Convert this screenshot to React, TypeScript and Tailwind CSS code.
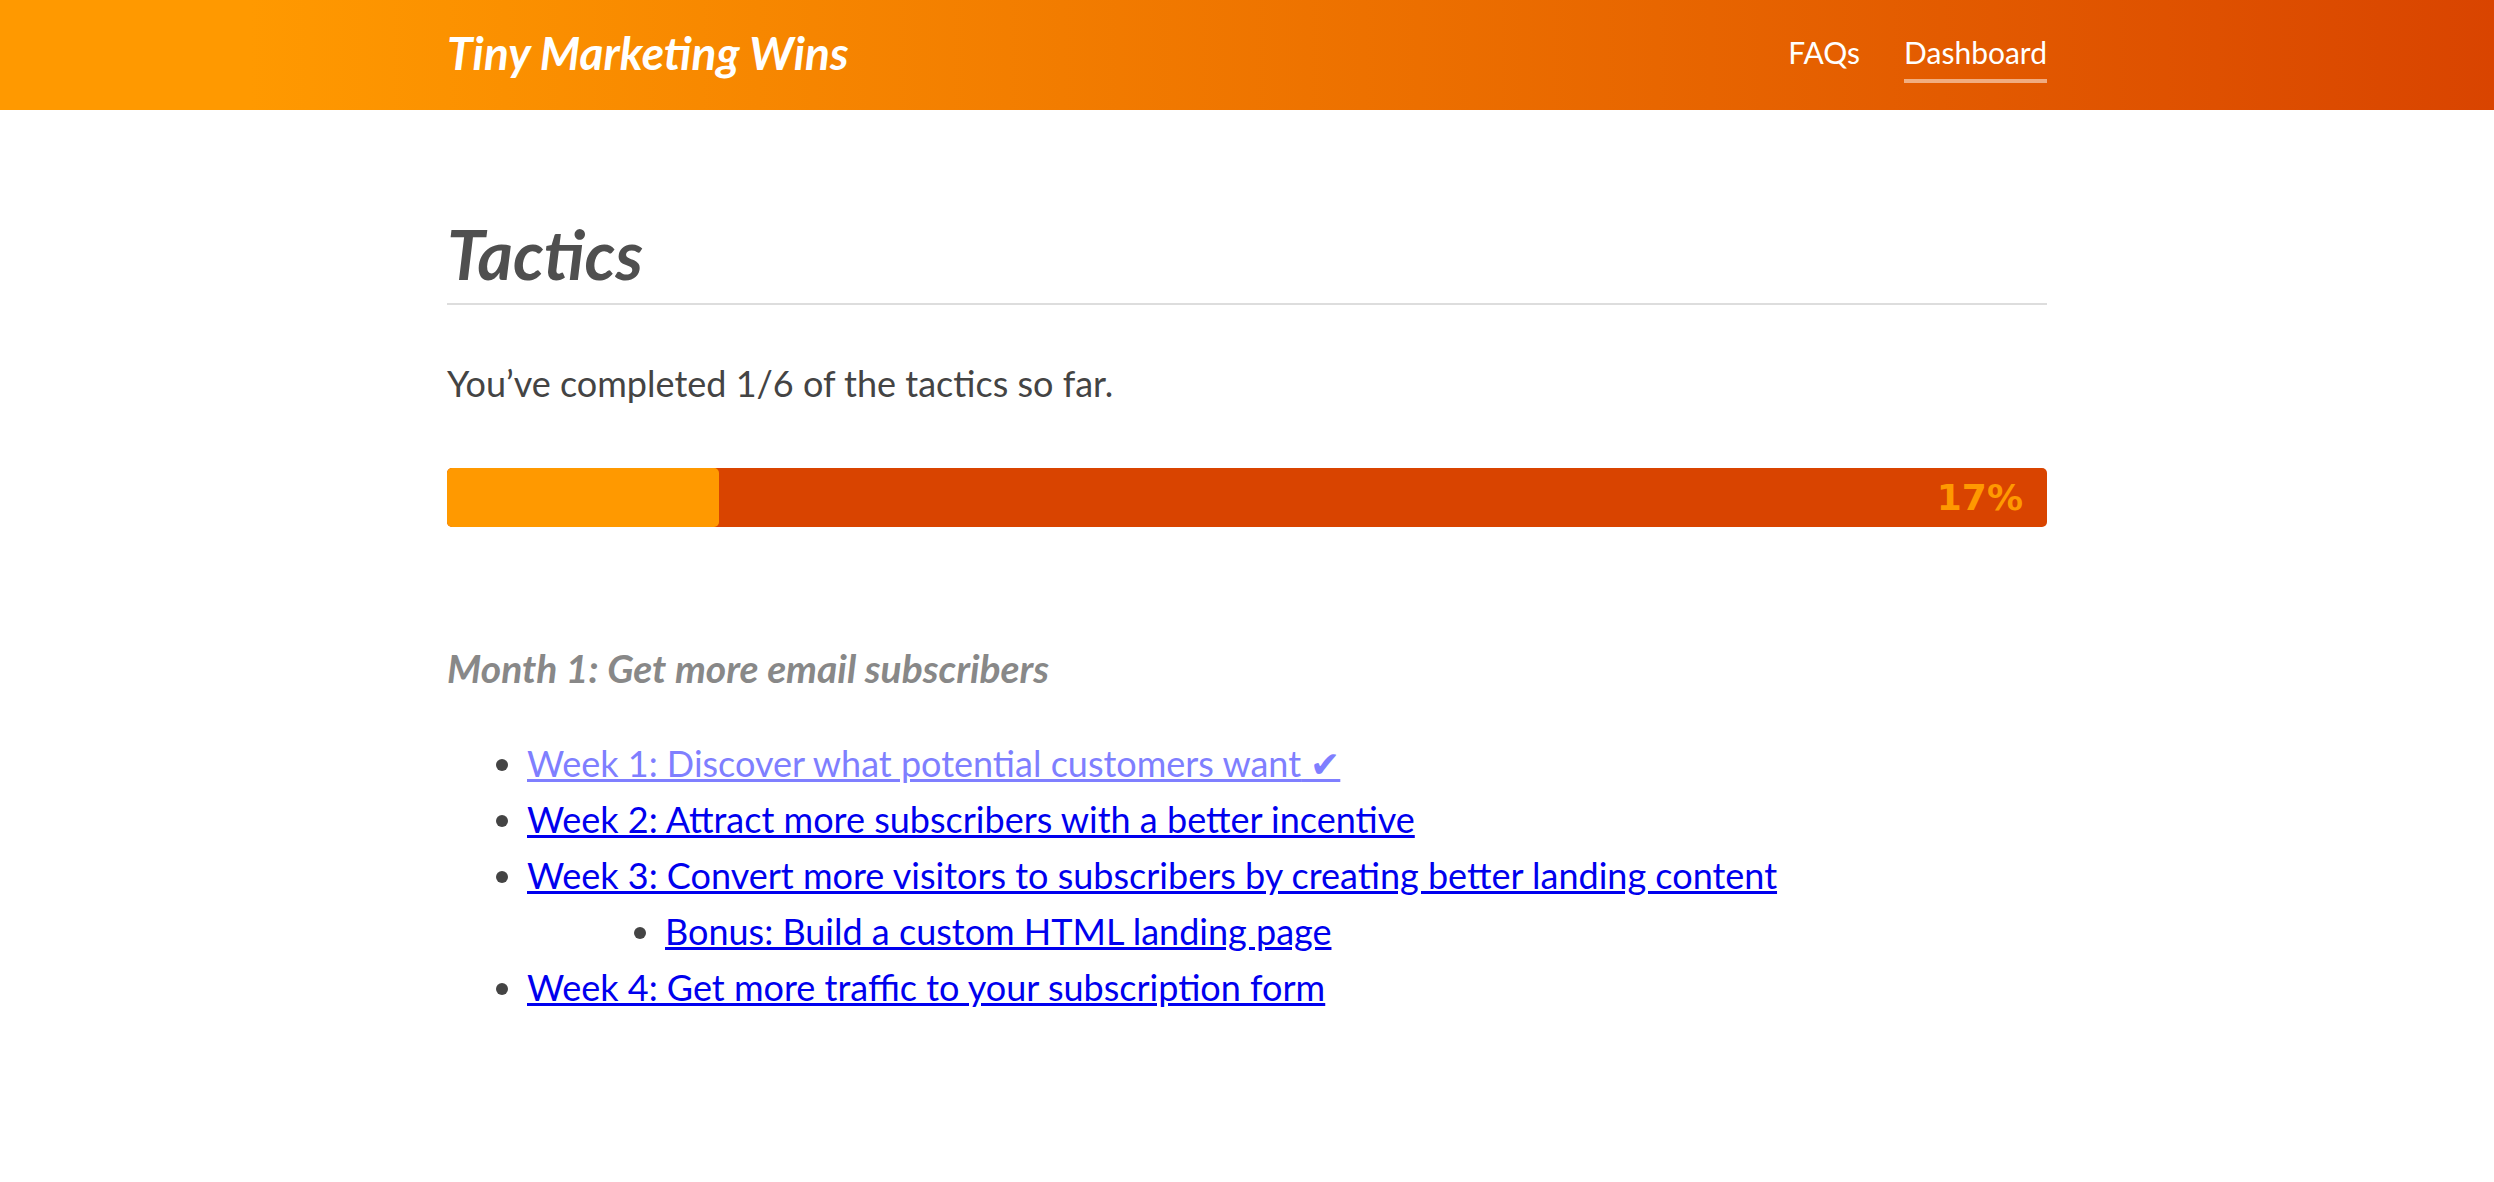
import React from "react";

const weeks = [
  { label: "Week 1: Discover what potential customers want", done: true },
  { label: "Week 2: Attract more subscribers with a better incentive", done: false },
  {
    label: "Week 3: Convert more visitors to subscribers by creating better landing content",
    done: false,
    bonus: ["Bonus: Build a custom HTML landing page"],
  },
  { label: "Week 4: Get more traffic to your subscription form", done: false },
];

export default function App() {
  const completed = 1;
  const total = 6;
  const pct = Math.round((completed / total) * 100);

  return (
    <div className="min-h-screen bg-white font-['Lato','Noto_Sans',sans-serif] text-[#444]">
      <header className="h-[110px] bg-gradient-to-r from-[#ff9900] from-10% to-[#d94400]">
        <div className="mx-auto flex h-full w-[1600px] items-center justify-between">
          <a className="mb-[6px] text-[46px] font-bold italic text-white">Tiny Marketing Wins</a>
          <nav className="mt-[2px] flex items-center gap-[44px] text-[30px] text-white">
            <a className="border-b-4 border-transparent pb-[4px]">FAQs</a>
            <a className="border-b-4 border-white/50 pb-[4px]">Dashboard</a>
          </nav>
        </div>
      </header>

      <main className="mx-auto w-[1600px] pt-[106px]">
        <h1 className="border-b-2 border-[#ddd] pb-[11px] text-[68px] font-bold italic leading-[76px] text-[#4f4f4f]">
          Tactics
        </h1>

        <p className="mt-[54px] text-[36px] leading-[48px]">
          You’ve completed {completed}/{total} of the tactics so far.
        </p>

        <div className="mt-[61px] flex h-[59px] items-center justify-between rounded-[5px] bg-[#d94400]">
          <div
            className="h-full rounded-[5px] bg-[#ff9900]"
            style={{ width: `${pct}%` }}
          />
          <span className="pr-[24px] font-['DejaVu_Sans',sans-serif] text-[36px] font-bold text-[#ff9900]">
            {pct}%
          </span>
        </div>

        <h2 className="mt-[117px] text-[39px] font-bold italic leading-[48px] text-[#888]">
          Month 1: Get more email subscribers
        </h2>

        <ul className="mt-[43px] list-disc pl-[80px] text-[36px] leading-[56px] marker:text-[#444]">
          {weeks.map((w) => (
            <li key={w.label}>
              <a
                href="#"
                className={w.done ? "text-[#7f7fff] underline" : "text-[#0000ee] underline"}
              >
                {w.label}
                {w.done && " ✔"}
              </a>
              {w.bonus && (
                <ul className="list-disc pl-[138px]">
                  {w.bonus.map((b) => (
                    <li key={b}>
                      <a href="#" className="text-[#0000ee] underline">
                        {b}
                      </a>
                    </li>
                  ))}
                </ul>
              )}
            </li>
          ))}
        </ul>
      </main>
    </div>
  );
}
